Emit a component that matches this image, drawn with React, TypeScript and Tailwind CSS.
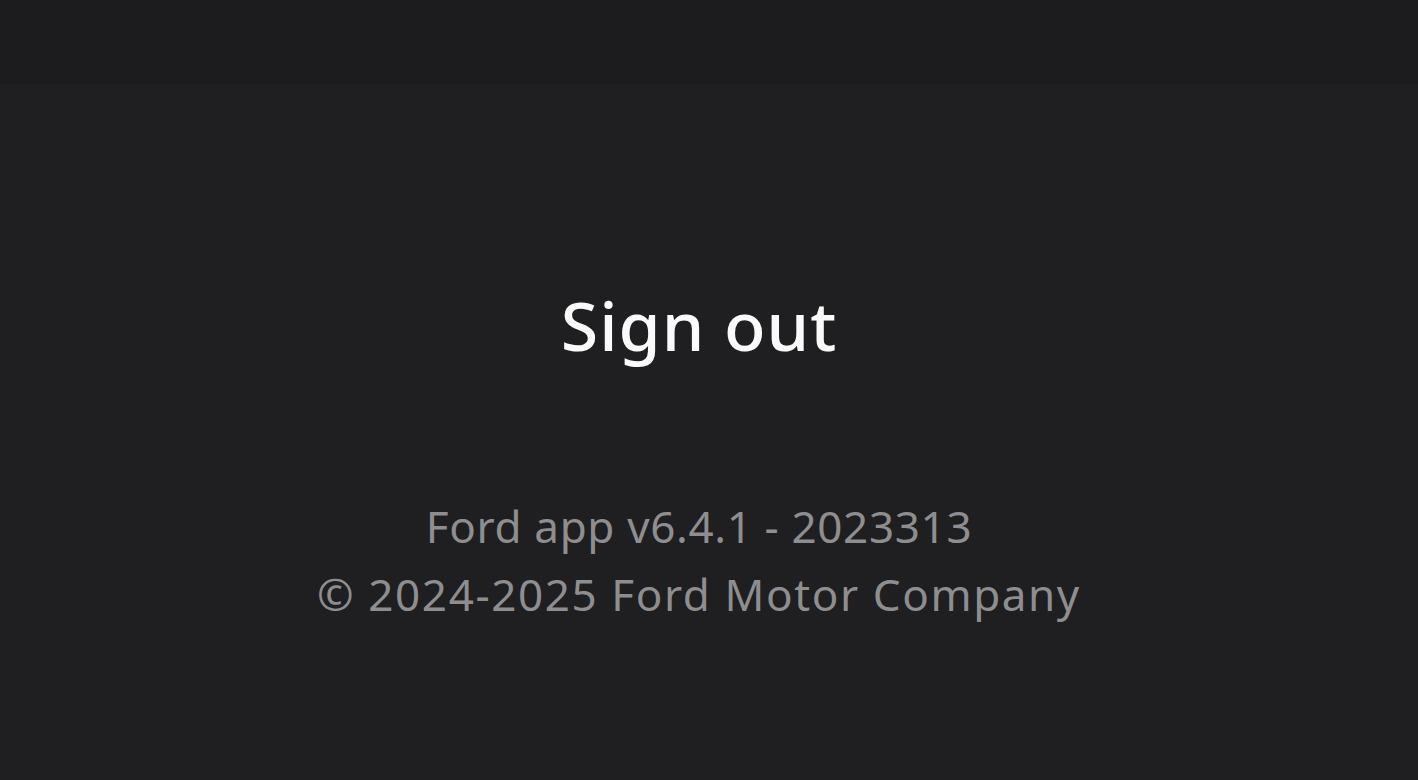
export default function App() {
  return (
    <div
      className="flex min-h-screen flex-col bg-[#1f1f21]"
      style={{ fontFamily: '"Noto Sans", "Open Sans", sans-serif' }}
    >
      {/* Top band */}
      <div className="h-[84px] w-full bg-[#1c1c1e]" />

      <main className="flex flex-1 flex-col items-center pr-[20px] pt-[207px]">
        <h1 className="text-[68px] font-medium leading-none tracking-[1px] text-[#fafafa]">
          Sign out
        </h1>

        <div className="mt-[133px] text-center text-[44px] leading-[68px] text-[#8e8e90]">
          <p className="tracking-[0.65px]">Ford app v6.4.1 - 2023313</p>
          <p className="tracking-[1.6px]">© 2024-2025 Ford Motor Company</p>
        </div>
      </main>
    </div>
  );
}
